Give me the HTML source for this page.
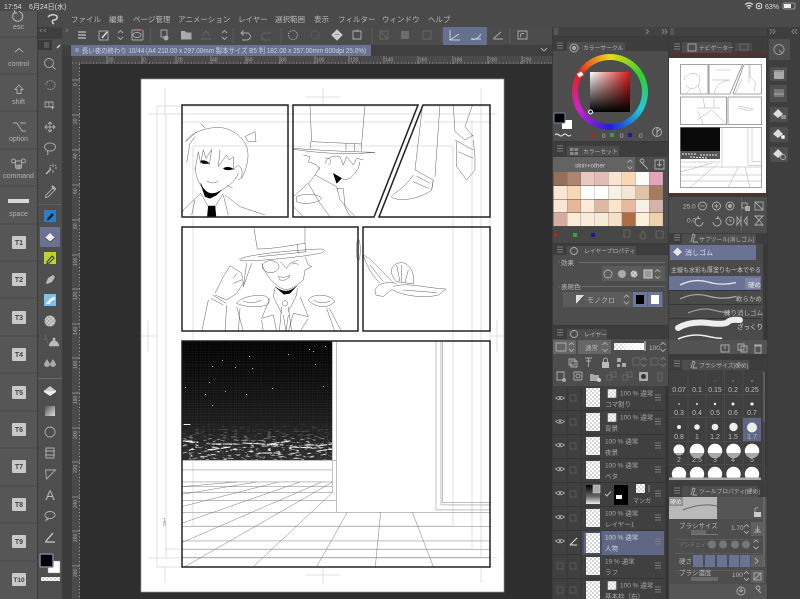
<!DOCTYPE html>
<html lang="ja"><head><meta charset="utf-8"><title>Clip Studio</title>
<style>
html,body{margin:0;padding:0;width:800px;height:599px;overflow:hidden;background:#2e2e2e}
#root{position:absolute;left:0;top:0;width:800px;height:599px;overflow:hidden;filter:blur(.3px)}
svg{position:absolute;left:0;top:0;display:block}
#wheel{position:absolute;left:572px;top:54px;width:76px;height:76px;border-radius:50%;background:conic-gradient(from 300deg,#e8201c,#e8d81c,#30d030,#20c8d8,#2020d8,#d020d0,#e8201c)}
#hole{position:absolute;left:578px;top:60px;width:64px;height:64px;border-radius:50%;background:#4d4d4d}
text{font-family:"Liberation Sans","Noto Sans CJK JP",sans-serif;fill:#b8b8b8;font-size:7.5px}
.h{font-size:5.8px}
.k{font-size:7px;fill:#b4b4b4;text-anchor:middle}
.t{font-size:7px;font-weight:bold;fill:#444;text-anchor:middle}
.s{font-size:6.5px;fill:#a8a8a8}
.r{font-size:5px;fill:#aaa}
.c{font-size:7px;fill:#bcbcbc;text-anchor:middle}
.i{fill:none;stroke:#aeaeae;stroke-width:.9}
.d{fill:none;stroke:#666;stroke-width:1}
.a path,.a ellipse,.a circle,.a rect{fill:none;stroke:#444;stroke-width:1.3}
.a .f{fill:#000;stroke:#000}
.g line,.g rect{fill:none;stroke:#d6d6e2;stroke-width:.8}
.b rect,.b path{fill:none;stroke:#222;stroke-width:1.5}
</style></head><body><div id="root">
<svg width="800" height="599" viewBox="0 0 800 599">
<defs>
<pattern id="chk" width="4" height="4" patternUnits="userSpaceOnUse"><rect width="4" height="4" fill="#fff"/><rect width="2" height="2" fill="#d5d5d5"/><rect x="2" y="2" width="2" height="2" fill="#d5d5d5"/></pattern>
<pattern id="grid" width="2.6" height="2.6" patternUnits="userSpaceOnUse"><path d="M0 0H2.6M0 0V2.6" stroke="#555" stroke-width=".6" fill="none"/></pattern>
<linearGradient id="sky" x1="0" y1="0" x2="0" y2="1"><stop offset="0" stop-color="#000"/><stop offset=".55" stop-color="#151515"/><stop offset="1" stop-color="#2c2c2c"/></linearGradient>
<linearGradient id="wr" x1="0" y1="0" x2="1" y2="0"><stop offset="0" stop-color="#fff"/><stop offset="1" stop-color="#d81818"/></linearGradient>
<linearGradient id="bk" x1="0" y1="0" x2="0" y2="1"><stop offset="0" stop-color="#000" stop-opacity="0"/><stop offset="1" stop-color="#000"/></linearGradient>
<linearGradient id="mono" x1="0" y1="0" x2="1" y2="1"><stop offset=".5" stop-color="#ddd"/><stop offset=".5" stop-color="#555"/></linearGradient>
<linearGradient id="grad" x1="0" y1="0" x2="1" y2="1"><stop offset="0" stop-color="#555"/><stop offset="1" stop-color="#ddd"/></linearGradient>
<linearGradient id="mk" x1="0" y1="0" x2="0" y2="1"><stop offset="0" stop-color="#000"/><stop offset=".6" stop-color="#666"/><stop offset="1" stop-color="#eee"/></linearGradient>
<linearGradient id="op" x1="0" y1="0" x2="1" y2="0"><stop offset="0" stop-color="#fff" stop-opacity=".1"/><stop offset="1" stop-color="#fff"/></linearGradient>
<filter id="noise" x="0" y="0" width="100%" height="100%"><feTurbulence type="fractalNoise" baseFrequency=".18 .55" numOctaves="3" seed="5"/><feColorMatrix values="0 0 0 0 1 0 0 0 0 1 0 0 0 0 1 7 0 0 0 -4"/></filter>
<mask id="cityM"><linearGradient id="cg" x1="0" y1="0" x2="0" y2="1"><stop offset="0" stop-color="#000"/><stop offset=".35" stop-color="#444"/><stop offset=".7" stop-color="#eee"/><stop offset="1" stop-color="#aaa"/></linearGradient><rect x="182" y="422" width="150" height="38" fill="url(#cg)"/></mask>
<clipPath id="top4"><rect x="669" y="440" width="95" height="13"/></clipPath>
<g id="eye"><path d="M-4.500 0Q0-3.500 4.500 0Q0 3.500-4.500 0Z" fill="none" stroke="#a5a5a5" stroke-width=".8"/><circle r="1.200" fill="#a5a5a5"/></g>
<g id="chev"><path d="M-2.500-2L0-4.500 2.500-2M-2.500 2L0 4.500 2.500 2" fill="none" stroke="#aaa" stroke-width=".9"/></g>
<g id="mi"><rect width="8" height="8" fill="url(#chk)" stroke="#ddd" stroke-width=".6"/></g>
<path id="bar" d="M0 0h6M0 2.500h6M0 5h6" stroke="#7c7c7c" fill="none"/>
</defs>

<!-- base -->
<rect width="800" height="599" fill="#2e2e2e"/>
<rect width="800" height="27" fill="#4a4a4a"/>
<rect x="38" y="27" width="514" height="18" fill="#4b4b4b"/>
<rect x="38" y="45" width="514" height="11" fill="#3f3f3f"/>
<rect x="62" y="56" width="490" height="8" fill="#4a4a4a"/>
<rect x="62" y="56" width="10" height="543" fill="#3b3b3b"/>
<rect x="72" y="56" width="8" height="543" fill="#4a4a4a"/>
<path d="M72 63H552" stroke="#a0a0a0" stroke-dasharray="1 2.500" fill="none"/>
<path d="M79.500 64V599" stroke="#a0a0a0" stroke-dasharray="1 2.500" fill="none"/>
<path d="M107 56v8M142 56v8M176 56v8M211 56v8M246 56v8M280 56v8M315 56v8M349 56v8M384 56v8M418 56v8M453 56v8M488 56v8M522 56v8" stroke="#888" fill="none"/>
<path d="M72 80h8M72 115h8M72 150h8M72 185h8M72 220h8M72 255h8M72 289h8M72 324h8M72 358h8M72 393h8M72 428h8M72 462h8M72 497h8M72 531h8M72 566h8" stroke="#888" fill="none"/>
<text class="r" x="108" y="61.500">20</text><text class="r" x="143" y="61.500">0</text><text class="r" x="177" y="61.500">20</text><text class="r" x="212" y="61.500">40</text><text class="r" x="247" y="61.500">60</text><text class="r" x="281" y="61.500">80</text><text class="r" x="316" y="61.500">100</text><text class="r" x="350" y="61.500">120</text><text class="r" x="385" y="61.500">140</text><text class="r" x="419" y="61.500">160</text><text class="r" x="454" y="61.500">180</text><text class="r" x="489" y="61.500">200</text><text class="r" x="523" y="61.500">220</text>
<text class="r" transform="translate(77 86) rotate(-90)">0</text><text class="r" transform="translate(77 124) rotate(-90)">20</text><text class="r" transform="translate(77 159) rotate(-90)">40</text><text class="r" transform="translate(77 194) rotate(-90)">60</text><text class="r" transform="translate(77 229) rotate(-90)">80</text><text class="r" transform="translate(77 266) rotate(-90)">100</text><text class="r" transform="translate(77 300) rotate(-90)">120</text><text class="r" transform="translate(77 335) rotate(-90)">140</text><text class="r" transform="translate(77 369) rotate(-90)">160</text><text class="r" transform="translate(77 404) rotate(-90)">180</text><text class="r" transform="translate(77 439) rotate(-90)">200</text><text class="r" transform="translate(77 473) rotate(-90)">220</text><text class="r" transform="translate(77 508) rotate(-90)">240</text><text class="r" transform="translate(77 542) rotate(-90)">260</text><text class="r" transform="translate(77 577) rotate(-90)">280</text>

<!-- status -->
<text x="4" y="9" style="font-size:7px;fill:#ddd">17:54</text>
<text x="29" y="9" style="font-size:7px;fill:#ddd">6月24日(水)</text>
<path d="M745 4.500Q749 1.500 753 4.500M746.500 6.500Q749 4.500 751.500 6.500" fill="none" stroke="#ddd" stroke-width="1.100"/><circle cx="749" cy="8" r="1" fill="#ddd"/>
<circle cx="759" cy="6" r="2.800" fill="none" stroke="#ddd"/><circle cx="759" cy="6" r="1" fill="#ddd"/>
<text x="765" y="9" style="font-size:7px;fill:#ddd">63%</text>
<rect x="783" y="3" width="12" height="6" rx="1.500" fill="none" stroke="#aaa" stroke-width=".8"/><rect x="784" y="4" width="7" height="4" fill="#eee"/>

<!-- menu -->
<path d="M48 17Q52 13 57 16Q58 20 53 20M53 20Q51 22 54 24" fill="none" stroke="#c8c8c8" stroke-width="1.600"/>
<text x="71" y="22">ファイル</text><text x="109" y="22">編集</text><text x="133" y="22">ページ管理</text><text x="178" y="22">アニメーション</text><text x="238" y="22">レイヤー</text><text x="275" y="22">選択範囲</text><text x="314" y="22">表示</text><text x="338" y="22">フィルター</text><text x="382" y="22">ウィンドウ</text><text x="428" y="22">ヘルプ</text>

<!-- left keys -->
<rect x="0" y="11" width="37" height="588" fill="#565656"/>
<rect x="37" y="11" width="1" height="588" fill="#3c3c3c"/>
<path d="M0 37h37M0 74h37M0 111h37M0 149h37M0 186h37M0 224h37M0 261h37M0 298h37M0 336h37M0 373h37M0 411h37M0 448h37M0 486h37M0 523h37M0 561h37" stroke="#454545" fill="none"/>
<path d="M14 13a5 5 0 1 0 5-1.500M15 10l-1 3 3 0" fill="none" stroke="#c4c4c4" stroke-width=".9"/>
<text class="k" x="18.500" y="29">esc</text>
<path d="M15 52l4-3.500 4 3.500" class="i"/><text class="k" x="18.500" y="66">control</text>
<path d="M19 85l4 4.500h-2v4h-4v-4h-2z" class="i"/><text class="k" x="18.500" y="104">shift</text>
<path d="M13 123h4l5 8h4M20 123h6" class="i"/><text class="k" x="18.500" y="141">option</text>
<path d="M15.500 161h6v6h-6zM15.500 161a2 2 0 1 1 0-.1M21.500 161a2 2 0 1 0 0-.1M15.500 167a2 2 0 1 0 0-.1M21.500 167a2 2 0 1 1 0-.1" class="i"/><text class="k" x="18.500" y="178">command</text>
<rect x="8" y="199" width="21" height="4" fill="#d8d8d8"/><text class="k" x="18.500" y="216">space</text>
<rect x="12" y="236" width="14" height="13" rx="1" fill="#c9c9c9"/><text class="t" x="19" y="245">T1</text>
<rect x="12" y="273" width="14" height="13" rx="1" fill="#c9c9c9"/><text class="t" x="19" y="282">T2</text>
<rect x="12" y="311" width="14" height="13" rx="1" fill="#c9c9c9"/><text class="t" x="19" y="320">T3</text>
<rect x="12" y="348" width="14" height="13" rx="1" fill="#c9c9c9"/><text class="t" x="19" y="357">T4</text>
<rect x="12" y="386" width="14" height="13" rx="1" fill="#c9c9c9"/><text class="t" x="19" y="395">T5</text>
<rect x="12" y="423" width="14" height="13" rx="1" fill="#c9c9c9"/><text class="t" x="19" y="432">T6</text>
<rect x="12" y="460" width="14" height="13" rx="1" fill="#c9c9c9"/><text class="t" x="19" y="469">T7</text>
<rect x="12" y="498" width="14" height="13" rx="1" fill="#c9c9c9"/><text class="t" x="19" y="507">T8</text>
<rect x="12" y="535" width="14" height="13" rx="1" fill="#c9c9c9"/><text class="t" x="19" y="544">T9</text>
<rect x="12" y="573" width="14" height="13" rx="1" fill="#c9c9c9"/><text class="t" x="19" y="582" style="font-size:6.500px">T10</text>

<!-- tool column -->
<rect x="38" y="27" width="24" height="572" fill="#4e4e4e"/>
<rect x="38" y="27" width="24" height="12" fill="#3e3e3e"/>
<rect x="38" y="40" width="14" height="10" fill="#3a3a3a"/>
<path d="M57 48l3-3" stroke="#ccc" stroke-width="1.500"/>
<path d="M44 43h5M44 45h5M44 47h5" stroke="#777"/>
<circle cx="49" cy="63" r="4.500" class="i"/><path d="M52.500 66.500l3 3" class="i"/>
<path d="M46 85a4.500 4.500 0 1 1 1.500 3.500" class="i" stroke-dasharray="1.500 1"/>
<path d="M45 102h8v5h-8zM49 102v5" class="i"/><path d="M51 106l4 1.500-2 .5-.5 2z" fill="#bbb"/>
<path d="M50 122v10M45 127h10M48 124l2-2 2 2M48 130l2 2 2-2M47 125l-2 2 2 2M53 125l2 2-2 2" class="i"/>
<ellipse cx="50" cy="147" rx="5.500" ry="4" class="i"/><path d="M47 151q2 3 0 4" class="i"/>
<path d="M46 174l5-5" stroke="#bbb" stroke-width="1.400"/><path d="M53 164v3M53 170v3M49 168h2M55 168h2M50 165l1 1M56 165l-1 1" class="i"/>
<path d="M46 195l7-7 2 2-7 7-2.500.5z" class="i"/><path d="M52 186l3.500 3.500" stroke="#bbb" stroke-width="2"/>
<rect x="38" y="204" width="24" height="1" fill="#5d5d5d"/>
<rect x="44" y="210" width="12" height="12" fill="#2b7fc4"/><path d="M47 219l5-6 2 2-5 5-2 .5z" fill="#123"/>
<rect x="40" y="227" width="20" height="20" rx="1" fill="#6b7392"/><path d="M45 238l5-5 5 5-5 4z" fill="#eee"/><path d="M45 238l5 4 5-4" fill="none" stroke="#555"/>
<rect x="44" y="252" width="12" height="12" fill="#bed22f"/><path d="M47 262l5-6 2 2-5 5-2 .5z" fill="none" stroke="#333"/>
<path d="M46 283l2-5 5-3 2 2-3 5-5 2z" fill="#bbb"/>
<rect x="44" y="294" width="12" height="12" fill="#7fc0ea"/><path d="M46 304q5-8 9-7v3q-4 0-5 4z" fill="#eaf6ff"/>
<circle cx="50" cy="321" r="5.500" fill="url(#chk)" opacity=".7"/>
<path d="M45 339h2M47 342h1M45 336h1M49 346h10q-1-5-4-5v-3h-2v3q-3 0-4 5z" fill="#bbb" stroke="#bbb" stroke-width=".5"/>
<path d="M47 359l-3 5a3 3 0 0 0 6 0zM53 359l-3 5a3 3 0 0 0 6 0z" fill="#aaa"/>
<rect x="38" y="378" width="24" height="1" fill="#6a6a6a"/>
<path d="M45 390l5-4 5 4-5 4.500z" fill="#ccc"/><path d="M44 390q6 3 12 0v2l-6 4-6-4z" fill="#eee"/>
<rect x="45" y="406" width="10" height="10" fill="url(#grad)"/>
<circle cx="50" cy="432" r="5" class="i"/>
<path d="M46 448h8v10h-8zM45 451h10M45 455h10" class="i"/>
<path d="M45.500 470h10l-9 9z" class="i"/>
<text x="50" y="500" style="font-size:14px;fill:#b8b8b8;text-anchor:middle">A</text>
<ellipse cx="50" cy="515" rx="5" ry="3.500" class="i"/><path d="M47 518l-1 2.500 3-2" class="i"/>
<path d="M46 541l7-8M45 542h10" stroke="#ccc" stroke-width="1.300"/>
<rect x="48" y="561" width="12" height="12" fill="#fff" stroke="#888" stroke-width=".5"/>
<rect x="40" y="554" width="13" height="13" rx="1" fill="#000" stroke="#7a84a8" stroke-width="1.500"/>
<rect x="41" y="577" width="19" height="4" fill="url(#chk)"/>

<!-- toolbar -->
<path d="M78 32h8M78 35h8M78 38h8" stroke="#c4c4c4" fill="none" stroke-width="1.200"/>
<rect x="99" y="31" width="9" height="9" class="i"/><path d="M102 38l5-6" stroke="#ddd" stroke-width="1.500"/>
<use href="#chev" x="120.500" y="35"/>
<rect x="132" y="30" width="11" height="10" rx="1" class="i"/><ellipse cx="137" cy="35" rx="4" ry="2.500" class="i"/><circle cx="142" cy="30" r="1" fill="#d33"/>
<path d="M150.500 28v15M233 28v15M281 28v15M372 28v15M442 28v15M510 28v15" stroke="#5e5e5e" fill="none"/>
<path d="M161 30h6v7h-6z" class="i"/><circle cx="166" cy="38" r="2.500" fill="#aaa"/>
<path d="M181 31h4l1.500 1.500h5v7h-10.500z" fill="#aaa"/>
<path d="M201 39h10M202 36l4-5 4 5" class="d"/>
<use href="#chev" x="224.500" y="35"/>
<path d="M241 33h6a3 3 0 0 1 0 7h-5M243.500 30.500L241 33l2.500 2.500" class="i"/>
<path d="M271 33h-6a3 3 0 0 0 0 7h5" class="d"/>
<circle cx="293" cy="35" r="4.500" class="i" stroke-dasharray="1.500 1"/>
<circle cx="315" cy="35" r="4" class="d" stroke-dasharray="1 1"/>
<path d="M332 35l5-5 5 5-5 5zM332 34q5 2 10 0" fill="#ccc" stroke="#ccc"/>
<path d="M353 31h8v8h-8zM357 29v3" class="i"/>
<rect x="380" y="31" width="8" height="8" class="d"/><path d="M380 31l8 8" class="d"/>
<rect x="401" y="31" width="8" height="8" fill="#6c6c6c"/><rect x="423" y="31" width="8" height="8" class="d"/>
<rect x="443" y="27" width="44" height="18" rx="1" fill="#66708f"/>
<path d="M450 30v10h10M450 40l9-6" fill="none" stroke="#c9cfe3"/>
<path d="M471 39q6 2 10-5M471 39h10" fill="none" stroke="#c9cfe3"/>
<path d="M493 39h10M494 38l7-6" class="i"/>
<path d="M518 31h9v8h-9zM521 37a2 2 0 1 1 3-3" class="i"/>
<rect x="71" y="45" width="300" height="11" fill="#6a7292"/>
<rect x="75" y="48" width="4" height="4" fill="#8d94ad"/>
<text x="82" y="53.200" textLength="284" lengthAdjust="spacingAndGlyphs" style="font-size:7px;fill:#cfd1da">長い夜の終わり 10/44 (A4 210.00 x 297.00mm 製本サイズ B5 判 182.00 x 257.00mm 600dpi 25.0%)</text>
<path d="M541 48l3 3 3-3" class="i"/>
<path d="M42 32l-2-1.500 2-1.500M46 32l-2-1.500 2-1.500M66 32l2-1.500-2-1.500" stroke="#777" fill="none"/>

<!-- page -->
<rect x="141" y="79" width="363" height="513" fill="#fff" stroke="#999" stroke-width=".7"/>
<g class="g">
<rect x="157" y="106" width="333" height="461"/>
<rect x="166" y="114" width="315" height="444"/>
<rect x="193" y="146" width="260" height="380"/>
<line x1="472" y1="120" x2="472" y2="549"/>
<line x1="166" y1="549" x2="472" y2="549"/>
<line x1="306" y1="97" x2="340" y2="97"/><line x1="323" y1="88" x2="323" y2="105"/>
<line x1="165" y1="88" x2="165" y2="114"/><line x1="148" y1="114" x2="166" y2="114"/>
<line x1="481" y1="88" x2="481" y2="114"/><line x1="481" y1="114" x2="497" y2="114"/>
<line x1="148" y1="320" x2="148" y2="352"/><line x1="141" y1="336" x2="157" y2="336"/>
<line x1="497" y1="320" x2="497" y2="352"/><line x1="490" y1="336" x2="504" y2="336"/>
<line x1="306" y1="575" x2="340" y2="575"/><line x1="323" y1="568" x2="323" y2="584"/>
<line x1="165" y1="567" x2="165" y2="583"/><line x1="481" y1="567" x2="481" y2="583"/>
<line x1="148" y1="558" x2="166" y2="558"/><line x1="481" y1="558" x2="497" y2="558"/>
</g>
<text x="163" y="522" style="font-size:5px;fill:#777">1</text><text x="163" y="526" style="font-size:5px;fill:#777">0</text>
<path d="M182 122H418M423 122H490" stroke="#d5e5d5" fill="none"/>

<!-- dark panel art -->
<rect x="182" y="341" width="150" height="119" fill="url(#sky)"/>
<rect x="182" y="341" width="150" height="119" fill="url(#grid)" opacity=".35"/>
<rect x="182" y="422" width="150" height="38" filter="url(#noise)" mask="url(#cityM)"/>
<g stroke="#fff" fill="none" stroke-linecap="round">
<path d="M183 441h9M184 424.500h6M186 441.500l12 1M212 444h20M230 447l-20 3M243 443l40 2M290 441l-20 3M290 447l26 1M318 446l14-2M318 451l14-2M305 445h12M263 453h16" stroke-width="1" stroke-dasharray="3 1 5 2 1 1"/>
</g>
<g fill="#bbb"><rect x="222" y="360" width="1" height="1"/><rect x="249" y="356" width="1" height="1"/><rect x="288" y="354" width="1" height="1"/><rect x="309" y="349" width="1" height="1"/><rect x="313" y="351" width="1" height="1"/><rect x="325" y="346" width="1" height="1"/><rect x="212" y="366" width="1" height="1"/><rect x="235" y="367" width="1" height="1"/><rect x="252" y="368" width="1" height="1"/><rect x="315" y="364" width="1" height="1"/><rect x="209" y="382" width="1" height="1"/><rect x="185" y="387" width="1" height="1"/><rect x="205" y="394" width="1" height="1"/><rect x="225" y="391" width="1" height="1"/><rect x="246" y="394" width="1" height="1"/><rect x="272" y="388" width="1" height="1"/><rect x="323" y="386" width="1" height="1"/><rect x="212" y="405" width="1" height="1"/></g>
<g class="a" transform="translate(140 335) scale(.3333)">
<path style="stroke:#999;stroke-width:1.800" d="M125 405H577M125 377H590M125 441H577M125 455H577M125 472H577M125 497H590M125 532H1050M125 574H1050M125 618H1050M125 643H1050M125 667H1050M577 20V472M590 20V532M888 20V525M903 20V510M907 20V503M888 525H1050M903 510H1050M907 503H1050"/>
<path style="stroke:#777;stroke-width:1.500" d="M125 455L290 441M125 478L350 441M125 515L415 441M125 565L480 441M125 623L545 441M135 695L578 441M340 695L578 472M530 695L622 532M706 695L722 532M880 695L817 532"/>
</g>

<!-- panel 1 & 2 art -->
<g class="a" transform="translate(180 100) scale(.3333)">
<path d="M17 125C30 100 70 85 110 82C150 82 185 105 200 140C210 170 200 205 185 235M50 95L17 125M45 110L30 130L20 188"/>
<path d="M62 70L75 85M195 110L225 95L228 125L205 125L195 110"/>
<path d="M45 210L55 155L62 190L70 150L78 175L95 148L88 195M120 150L115 200L140 165L148 180L160 170L160 210L175 195"/>
<path d="M45 205C50 240 62 260 75 272M175 220C165 245 140 262 125 270M175 195C190 205 190 235 175 240M140 255L158 265M80 243Q100 255 115 243"/>
<path d="M62 280L85 320M130 280L105 320M62 280L10 330L5 345M130 285L145 345M135 285L180 320L255 345M45 300L35 345"/>
<path class="f" d="M62 250C75 280 95 290 125 270L110 285L90 295L75 290Z"/>
<path class="f" d="M85 318L105 318L108 350L82 350Z"/>
<path class="f" d="M62 183Q75 178 88 190Q75 192 66 190ZM130 205Q145 197 160 207Q148 212 135 209Z"/>
<path d="M390 15L395 125M555 15L545 130M395 125L545 132M342 145C400 150 500 155 585 157C500 165 420 160 342 148ZM392 125V146M498 130V152M523 131V153M545 130V154"/>
<path d="M370 165L390 170L385 185L410 195L420 210M435 190C440 170 470 165 480 170L490 195L500 170L520 195L530 175L550 180M540 185L535 205L525 220L510 235L495 240L485 235M435 175C450 170 460 185 445 195"/>
<path d="M405 225L470 260M420 200L405 225L390 245L340 290M350 290C370 280 415 280 425 295C415 310 370 315 350 305ZM470 260L480 300L525 350M385 250L420 310L450 350M470 265H490L495 320L510 350M340 320L370 350"/>
<path class="f" d="M460 220L485 235L470 250Z"/>
</g>
<g class="a" transform="translate(180 225) scale(.3333)">
<path d="M222 10L232 72M375 5V55M232 72C280 72 340 60 375 55M235 95C290 90 340 85 378 80M375 55L378 82M352 58L355 85M180 103C190 92 300 78 420 72C440 72 435 80 420 85C340 100 210 110 185 107C178 105 178 103 180 103Z"/>
<path d="M375 95L385 120L395 125L375 135L370 165L350 180M245 115C255 145 270 165 290 180C310 200 330 195 350 180M335 118Q345 110 355 120M300 110L320 130L330 115L355 105"/>
<ellipse cx="272" cy="125" rx="25" ry="18"/>
<path d="M295 155Q320 160 330 150Q322 170 300 165Z"/>
<path class="f" d="M285 185C300 195 320 210 350 183L330 205L312 208Z"/>
<path d="M285 190L280 215L305 265M352 190L350 210L325 260M305 245L298 320M325 245L335 320M310 270L318 320L325 270M270 220L245 280L280 270L290 320M360 215L385 275L340 265L325 320M245 285L250 320M385 280L360 320"/>
<circle cx="315" cy="235" r="8"/>
<path d="M170 235C180 215 240 205 260 215C270 225 270 235 260 240C230 250 190 245 170 235ZM385 225C395 205 450 205 465 230C440 255 400 245 385 225ZM190 228Q215 240 245 225M400 225Q425 240 450 228"/>
<path d="M448 250L485 320M440 250L465 320M170 245L190 320M180 250L175 320"/>
<path d="M150 122L130 155L105 205M150 122L185 145L190 175L170 205L140 225L105 210M170 145L160 160M185 165L160 175M98 210L138 235M93 220L130 240M85 225L65 320M140 240L135 320M215 115L190 185L200 115"/>
</g>
<!-- legs & bird -->
<g class="a" transform="translate(140 90) scale(.3333)">
<path d="M848 44L825 240M900 44L885 260M825 240L880 270L875 300M940 44L945 125M998 44L975 110L1000 140M945 125L975 150L1000 135M950 155V230L980 270L1005 240L1005 200L1000 150M955 185L1000 205M945 150L1000 180"/>
<path d="M820 255C790 300 755 310 755 322C775 335 835 330 875 300L880 270M830 258L870 280M820 275L865 295"/>
<ellipse cx="655" cy="480" rx="6" ry="32"/>
<path d="M670 495C680 530 700 560 720 580M670 495C695 505 730 550 760 578M690 525L730 575M705 600C715 580 735 575 770 580M705 600L708 615L730 620L755 598"/>
<path d="M770 575C745 550 750 520 785 518C810 520 825 550 820 582ZM785 525V575M770 525L780 575M805 540L795 578"/>
<path d="M760 590C800 575 860 595 918 597L895 615C860 625 790 620 755 598M790 600L890 608"/>
</g>
<!-- borders -->
<g class="b">
<rect x="182" y="105" width="106" height="112"/>
<path d="M293 105H418L374 217H293Z"/>
<path d="M423 105H490V217H379Z"/>
<rect x="182" y="227" width="176" height="104"/>
<rect x="363" y="227" width="127" height="104"/>
<rect x="182" y="341" width="308" height="226"/>
</g>

<!-- right side bg -->
<rect x="552" y="27" width="248" height="572" fill="#3a3a3a"/>
<rect x="768" y="27" width="32" height="572" fill="#3e3e3e"/>
<rect x="553" y="27" width="115" height="9" fill="#424242"/><rect x="669" y="27" width="98" height="9" fill="#424242"/>
<rect x="554" y="28" width="4" height="7" fill="#555"/><rect x="670" y="28" width="4" height="7" fill="#555"/>
<path d="M646 29l2.500 2.500-2.500 2.500M662 29l2 2.500-2 2.500M665 29l2 2.500-2 2.500M770 29l2 2.500-2 2.500M773 29l2 2.500-2 2.500M797 29l-2 2.500 2 2.500M794 29l-2 2.500 2 2.500" stroke="#888" fill="none"/>

<!-- color circle panel -->
<rect x="553" y="37" width="115" height="104" fill="#4d4d4d"/>
<rect x="553" y="37" width="115" height="14" fill="#3d3d3d"/>
<rect x="567" y="42" width="58" height="10" rx="1" fill="#4d4d4d"/>
<use href="#bar" x="557" y="43"/>
<circle cx="574" cy="48" r="4" fill="none" stroke="#aaa"/><circle cx="574" cy="48" r="2" fill="#aaa"/>
<text class="h" x="583" y="50">カラーサークル</text>
<rect x="553" y="141" width="115" height="2" fill="#3a3a3a"/>
</svg>

<div id="wheel"></div><div id="hole"></div>

<svg width="800" height="599" viewBox="0 0 800 599">
<rect x="590" y="72" width="40" height="40" fill="url(#wr)"/>
<rect x="590" y="72" width="40" height="40" fill="url(#bk)"/>
<circle cx="590.500" cy="112" r="2" fill="none" stroke="#fff"/>
<rect x="577" y="72" width="6" height="5" fill="#fff" stroke="#c33" transform="rotate(-30 580 74)"/>
<rect x="562" y="120" width="10" height="9" fill="#fff"/>
<rect x="554" y="113" width="11" height="10" rx="1" fill="#000" stroke="#7a84a8"/>
<path d="M555 135q2-2 4 0t4 0 4 0 4 0" fill="none" stroke="#ddd" stroke-width="1.200"/>
<rect x="591" y="133" width="4" height="4" fill="#a02b20"/><rect x="610" y="133" width="4" height="4" fill="#3aa03a"/><rect x="628" y="133" width="4" height="4" fill="#1a1aa0"/>
<text x="602" y="138" style="font-size:6.500px">0</text><text x="620" y="138" style="font-size:6.500px">0</text><text x="639" y="138" style="font-size:6.500px">0</text>
<circle cx="657" cy="132" r="4.500" fill="none" stroke="#aaa"/><path d="M657 127.500v9M657 132l3-3" stroke="#aaa" fill="none"/>

<!-- color set -->
<rect x="553" y="143" width="115" height="14" fill="#3d3d3d"/>
<rect x="567" y="146" width="52" height="10" rx="1" fill="#4d4d4d"/>
<use href="#bar" x="557" y="146"/>
<rect x="570" y="148" width="8" height="7" fill="#888"/><path d="M570 151.500h8M574 148v7" stroke="#333" stroke-width=".7"/>
<text class="h" x="583" y="153.500">カラーセット</text>
<rect x="553" y="157" width="115" height="70" fill="#4d4d4d"/>
<rect x="553" y="157" width="82" height="15" rx="1" fill="#636363"/>
<text x="575" y="167.500" style="font-size:6.500px;fill:#cfcfcf">skin+other</text>
<use href="#chev" x="630" y="164.500"/>
<path d="M640 161l6 6M646 167l2 2M640 161a2 2 0 1 1 2 2" class="i"/>
<path d="M655 160h9v9h-9zM659.500 161v5M657.500 164l2 2 2-2" class="i"/>
<rect x="553.500" y="172" width="13.500" height="13.500" fill="#966f58"/><rect x="567.200" y="172" width="13.500" height="13.500" fill="#ad8673"/><rect x="580.900" y="172" width="13.500" height="13.500" fill="#e8c9bd"/><rect x="594.600" y="172" width="13.500" height="13.500" fill="#e3bdb3"/><rect x="608.300" y="172" width="13.500" height="13.500" fill="#f9e4d3"/><rect x="622" y="172" width="13.500" height="13.500" fill="#f8d8b4"/><rect x="635.700" y="172" width="13.500" height="13.500" fill="#fbfbf7"/><rect x="649.400" y="172" width="13.500" height="13.500" fill="#e5a3b8"/>
<rect x="553.500" y="186" width="13.500" height="13" fill="#fbe6d4"/><rect x="567.200" y="186" width="13.500" height="13" fill="#f8d7b4"/><rect x="580.900" y="186" width="13.500" height="13" fill="#fff"/><rect x="594.600" y="186" width="13.500" height="13" fill="#fff"/><rect x="608.300" y="186" width="13.500" height="13" fill="#f9f0e6"/><rect x="622" y="186" width="13.500" height="13" fill="#f6e5d2"/><rect x="635.700" y="186" width="13.500" height="13" fill="#e0c2a6"/><rect x="649.400" y="186" width="13.500" height="13" fill="#a67d63"/>
<rect x="553.500" y="199.500" width="13.500" height="13" fill="#fbe6d4"/><rect x="567.200" y="199.500" width="13.500" height="13" fill="#e6b79a"/><rect x="580.900" y="199.500" width="13.500" height="13" fill="#fce9d8"/><rect x="594.600" y="199.500" width="13.500" height="13" fill="#dfb8a4"/><rect x="608.300" y="199.500" width="13.500" height="13" fill="#fbe5c8"/><rect x="622" y="199.500" width="13.500" height="13" fill="#e6b99e"/><rect x="635.700" y="199.500" width="13.500" height="13" fill="#f7efe3"/><rect x="649.400" y="199.500" width="13.500" height="13" fill="#d7b2a8"/>
<rect x="553.500" y="213" width="13.500" height="13" fill="#d5aba2"/><rect x="567.200" y="213" width="13.500" height="13" fill="#fbebd5"/><rect x="580.900" y="213" width="13.500" height="13" fill="#faeadb"/><rect x="594.600" y="213" width="13.500" height="13" fill="#f7ead8"/><rect x="608.300" y="213" width="13.500" height="13" fill="#f6dfcb"/><rect x="622" y="213" width="13.500" height="13" fill="#ad6d42"/><rect x="635.700" y="213" width="13.500" height="13" fill="#fbefd9"/><rect x="649.400" y="213" width="13.500" height="13" fill="#ecd3ab"/>
<rect x="553" y="227" width="115" height="16" fill="#474747"/>
<rect x="554" y="233" width="4" height="4" fill="#a02b20"/><rect x="573" y="233" width="4" height="4" fill="#3aa03a"/><rect x="591" y="233" width="4" height="4" fill="#1a1aa0"/>
<path d="M624 230h6v7h-6zM640 236l3-5 3 5a3 3 0 0 1-6 0zM656 231h7v7h-7z" class="d"/>

<!-- layer property -->
<rect x="553" y="245" width="115" height="10" fill="#3d3d3d"/>
<rect x="567" y="246" width="69" height="10" rx="1" fill="#4d4d4d"/>
<use href="#bar" x="557" y="247"/>
<circle cx="574" cy="251" r="3.500" class="i"/>
<text class="h" x="584" y="253">レイヤープロパティ</text>
<rect x="553" y="255" width="115" height="70" fill="#4d4d4d"/>
<path d="M558 262h2M579 262.500h86M558 286.500h2M579 286.500h86" stroke="#888" fill="none" stroke-width=".6"/>
<text x="561" y="265" style="font-size:6.500px">効果</text>
<text x="561" y="289" style="font-size:6.500px">表現色</text>
<rect x="602" y="266" width="63" height="15" rx="1" fill="#5b5b5b"/>
<circle cx="608" cy="274" r="4" class="i"/><circle cx="622" cy="274" r="4" fill="#aaa"/><circle cx="634" cy="274" r="3.500" fill="url(#chk)" opacity=".7"/><rect x="644" y="270" width="8" height="8" fill="#999" stroke="#ccc"/>
<use href="#chev" x="657.500" y="274"/>
<rect x="563" y="292" width="99" height="15" rx="1" fill="#5b5b5b"/>
<rect x="576" y="295" width="8" height="9" fill="url(#mono)"/>
<text x="587" y="302.500" style="font-size:7px">モノクロ</text>
<use href="#chev" x="626.500" y="299.500"/>
<rect x="633" y="292" width="14.500" height="15" fill="#6b7698"/><rect x="636" y="295" width="8" height="9" fill="#000"/>
<rect x="648" y="292" width="14.500" height="15" fill="#6b7698"/><rect x="651" y="295" width="8" height="9" fill="#fff"/>

<!-- layer panel -->
<rect x="553" y="328" width="115" height="10" fill="#3d3d3d"/>
<rect x="567" y="329" width="40" height="10" rx="1" fill="#4d4d4d"/>
<use href="#bar" x="557" y="330"/>
<circle cx="574" cy="334" r="3.500" class="i"/>
<text class="h" x="584" y="336.500">レイヤー</text>
<rect x="553" y="339" width="115" height="47" fill="#4d4d4d"/>
<rect x="553" y="340" width="23" height="14" rx="1" fill="#666"/><rect x="556" y="343" width="10" height="8" rx="1" class="i"/><use href="#chev" x="571.500" y="347"/>
<rect x="578" y="340" width="33" height="14" rx="1" fill="#666"/><text x="585" y="350" style="font-size:6.500px">通常</text><use href="#chev" x="605" y="347"/>
<rect x="614" y="343" width="30" height="7" fill="url(#chk)"/><rect x="614" y="343" width="30" height="7" fill="url(#op)"/><rect x="644" y="341" width="2" height="10" fill="#999"/>
<text x="649" y="350" style="font-size:6.500px">100</text><use href="#chev" x="663" y="347"/>
<path d="M569 359h6v6h-6zM571 361h6v6h-6z" class="i"/><path d="M585 358h7M588.500 358v9M586 361h5" class="i" stroke-width="1.300"/>
<rect x="602" y="362" width="7" height="6" fill="#bbb"/><path d="M603.500 362v-2a2 2 0 0 1 4 0v2" class="i"/>
<rect x="617" y="358" width="4" height="4" fill="#aaa"/><rect x="622" y="363" width="4" height="4" fill="#aaa"/><rect x="617" y="364" width="3" height="3" fill="#aaa"/>
<path d="M633 358h7v7h-7zM651 358h7v7h-7z" class="d"/><use href="#chev" x="644" y="362" opacity=".5"/><use href="#chev" x="663" y="362" opacity=".5"/>
<path d="M557 372h7v8h-7z" class="i"/><circle cx="564" cy="380" r="2" fill="#aaa"/>
<rect x="574" y="372" width="8" height="8" rx="1" class="i"/><circle cx="578" cy="376" r="2" class="i"/>
<path d="M590 374h3l1 1h5v6h-9z" fill="#aaa"/><circle cx="599" cy="380" r="2" fill="#ccc"/>
<path d="M607 375h5v5h-5zM611 372h5v5h-5zM623 375h5v5h-5zM627 372h5v5h-5z" class="d"/>
<rect x="639" y="372" width="9" height="9" rx="1" fill="#aaa"/><circle cx="643.500" cy="376.500" r="2.500" fill="#333"/>
<path d="M657 373h6M658 373v8h4v-8" class="d"/>

<!-- layers list -->
<rect x="553" y="386" width="112" height="213" fill="#404040"/>
<rect x="666" y="386" width="2" height="213" fill="#333"/>
<path d="M553 410.500h112M553 434.500h112M553 458.500h112M553 482.500h112M553 506.500h112M553 530.500h112M553 554.500h112M553 578.500h112M567 386v213M581 386v213" stroke="#353535" fill="none"/>
<rect x="582" y="531" width="82" height="24" fill="#5f6785"/>
<rect x="583" y="532" width="18" height="22" fill="none" stroke="#30364d"/>
<use href="#eye" x="560" y="398"/><use href="#eye" x="560" y="421.500"/><use href="#eye" x="560" y="445"/><use href="#eye" x="560" y="469"/><use href="#eye" x="560" y="493"/><use href="#eye" x="560" y="517"/><use href="#eye" x="560" y="541"/>
<rect x="570" y="395" width="6" height="6" fill="none" stroke="#595959"/><rect x="570" y="419" width="6" height="6" fill="none" stroke="#595959"/><rect x="570" y="443" width="6" height="6" fill="none" stroke="#595959"/><rect x="570" y="467" width="6" height="6" fill="none" stroke="#595959"/><rect x="570" y="491" width="6" height="6" fill="none" stroke="#595959"/><rect x="570" y="515" width="6" height="6" fill="none" stroke="#595959"/>
<path d="M570 545l7-7M570 545h7" stroke="#ddd" fill="none"/>
<rect x="557" y="563" width="6" height="6" fill="none" stroke="#595959"/><rect x="570" y="563" width="6" height="6" fill="none" stroke="#595959"/>
<rect x="557" y="587" width="6" height="6" fill="none" stroke="#595959"/><rect x="570" y="587" width="6" height="6" fill="none" stroke="#595959"/>
<rect x="586" y="388" width="14" height="19" fill="url(#chk)"/><rect x="586" y="413" width="14" height="18" fill="url(#chk)"/><rect x="586" y="437" width="14" height="18" fill="url(#chk)"/><rect x="586" y="461" width="14" height="18" fill="url(#chk)"/>
<rect x="586" y="485" width="14" height="19" fill="url(#mk)"/><rect x="593" y="485" width="7" height="8" fill="#aaa" stroke="#ddd" stroke-width=".5"/>
<rect x="586" y="509" width="14" height="18" fill="url(#chk)"/><rect x="586" y="533" width="14" height="20" fill="url(#chk)"/><rect x="586" y="557" width="14" height="18" fill="url(#chk)"/><rect x="586" y="581" width="14" height="18" fill="url(#chk)"/>
<path d="M605 494l2 2 4-4.500" fill="none" stroke="#bbb"/>
<rect x="614" y="485" width="14" height="20" fill="#000"/><rect x="616" y="495" width="6" height="4" fill="#fff"/>
<rect x="636" y="484" width="9" height="9" fill="url(#chk)"/><path d="M649 485v7" stroke="#888"/>
<use href="#mi" x="608" y="389.500"/><use href="#mi" x="608" y="413.500"/><use href="#mi" x="608" y="581.500"/>
<text class="s" x="620" y="395.500">100 % 通常</text><text class="s" x="605" y="406.500">コマ割り</text>
<text class="s" x="620" y="419.500">100 % 通常</text><text class="s" x="605" y="430.500">背景</text>
<text class="s" x="605" y="443.500">100 % 通常</text><text class="s" x="605" y="454.500">夜景</text>
<text class="s" x="605" y="467.500">100 % 通常</text><text class="s" x="605" y="478.500">ベタ</text>
<text class="s" x="633" y="503" style="font-size:6px">マンガ</text>
<text class="s" x="605" y="515.500">100 % 通常</text><text class="s" x="605" y="526.500">レイヤー1</text>
<text class="s" x="605" y="539.500" style="fill:#cfd2dd">100 % 通常</text><text class="s" x="605" y="550.500" style="fill:#cfd2dd">人物</text>
<text class="s" x="605" y="563.500">19 % 通常</text><text class="s" x="605" y="574.500">ラフ</text>
<text class="s" x="620" y="587.500">100 % 通常</text><text class="s" x="605" y="598.500">基本枠（右）</text>
<use href="#bar" x="655" y="395"/><use href="#bar" x="655" y="419"/><use href="#bar" x="655" y="443"/><use href="#bar" x="655" y="467"/><use href="#bar" x="655" y="491"/><use href="#bar" x="655" y="515"/><use href="#bar" x="655" y="539"/><use href="#bar" x="655" y="563"/><use href="#bar" x="655" y="587"/>

<!-- navigator -->
<rect x="669" y="37" width="98" height="16" fill="#3d3d3d"/>
<rect x="682" y="42" width="50" height="11" rx="1" fill="#4d4d4d"/><rect x="735" y="43" width="17" height="8" fill="#4a4a4a"/>
<use href="#bar" x="674" y="44"/>
<rect x="688" y="44" width="8" height="7" class="i"/><rect x="740" y="44" width="8" height="6" class="d"/>
<text class="h" x="699" y="50">ナビゲーター</text>
<rect x="669" y="53" width="97" height="2" fill="#5c2d28"/>
<rect x="669" y="58" width="97" height="135" fill="#fff"/>
<rect x="669" y="193" width="97" height="2" fill="#5c2d28"/>
<g fill="none" stroke="#8a8a8a" stroke-width=".8">
<rect x="680.500" y="64.500" width="27.500" height="29.500"/><path d="M709 64.500h33.500L730 94h-21zM744 64.500h17.500v29.500H733z"/>
<rect x="680.500" y="97" width="46" height="27.500"/><rect x="728" y="97" width="33.500" height="27.500"/><rect x="680.500" y="127.500" width="81" height="60"/>
</g>
<rect x="680.500" y="127.500" width="39.500" height="31.500" fill="#0a0a0a"/>
<rect x="680.500" y="151" width="39.500" height="8" fill="#555"/>
<path d="M682 154h15M700 155h18M690 157l18 1" stroke="#eee" stroke-dasharray="2 1"/>
<g fill="none" stroke="#aaa" stroke-width=".5">
<path d="M684 80a9 9 0 0 1 15-4q3 8-4 12q-6 2-9-3M690 89l-4 5M698 84l3 10M714 94q2-12 15-14M716 70h14M712 80h18M735 94l7-15M750 65l0 12 6 6-2 8M749 65v18"/>
<path d="M698 108h22M703 98l2 10M714 98v10M697 120l15-10 14 14M703 124l-5-13M738 108l12 3 3-2-15-3"/>
<path d="M680.500 162h39.500M680.500 167h81M680.500 175h81M680.500 181h81M680.500 172l32-9M690 187.500l28-24M728 187.500l10-20M750 187.500l-5-20M722 127.500v40M748 127.500v38h14M752 127.500v34h10"/>
</g>

<!-- nav controls -->
<rect x="669" y="197" width="98" height="36" fill="#4d4d4d"/>
<text x="683" y="208.500" style="font-size:6.500px">25.0</text><text x="687" y="222.500" style="font-size:6.500px">0.0</text>
<circle cx="702.500" cy="206" r="4" class="i"/><path d="M700.500 206h4" class="i"/>
<circle cx="716.500" cy="206" r="4" class="i"/><path d="M714.500 206h4M716.500 204v4" class="i"/>
<circle cx="730" cy="206" r="4" class="i"/><circle cx="730" cy="206" r="2" fill="#aaa"/>
<path d="M741.500 197v36" stroke="#5f5f5f"/>
<rect x="742" y="203" width="5" height="5" class="i"/><rect x="745" y="206" width="5" height="5" fill="#aaa"/>
<rect x="755" y="202" width="8" height="8" class="i"/><path d="M755 202l8 8" class="i"/>
<path d="M703 222a4 4 0 1 1-4-4M698 216v2.500h2.500M713 222a4 4 0 1 0 4-4M718 216v2.500h-2.500" class="i"/>
<circle cx="730" cy="221" r="4" class="i"/><path d="M730 219v2h1.500" class="i"/>
<path d="M741 216v10M744 221l3-4v8zM740 221l-3-4v8z" class="i"/>
<path d="M755 216h8l-4 4 4 5h-8l4-5z" class="i"/>

<!-- subtool -->
<rect x="669" y="233" width="98" height="11" fill="#3d3d3d"/>
<rect x="682" y="234" width="74" height="10" rx="1" fill="#4d4d4d"/>
<use href="#bar" x="674" y="235"/>
<path d="M691 242l2-8 2 1-2 7h5" class="i"/>
<text class="h" x="699" y="241.500">サブツール[消しゴム]</text>
<rect x="669" y="244" width="94" height="97" fill="#4a4a4a"/>
<rect x="670" y="245" width="86" height="15" fill="#6b7394"/>
<path d="M673 252l4.500-4.500 4.500 4.500-4.500 4z" fill="#e8e8e8"/>
<text x="685" y="255" style="font-size:7px;fill:#dde">消しゴム</text>
<rect x="765" y="244" width="2" height="110" fill="#363636"/>
<text x="671" y="272" textLength="90" lengthAdjust="spacingAndGlyphs" style="font-size:6.500px;fill:#c8c8c8">主線も水彩も厚塗りも一本でやる</text>
<rect x="669" y="276" width="92" height="14" fill="#6b7394"/><rect x="745" y="278" width="15" height="11" fill="#7e86a4"/>
<path d="M680 285q14-7 28-3t28 .5" fill="none" stroke="#dfe3ef" stroke-width="1.300"/>
<text x="748" y="287" style="font-size:6.500px;fill:#e3e3e3">硬め</text>
<path d="M669 290.500h92M669 304.500h92M669 318.500h92" stroke="#353535"/>
<path d="M680 299q14-7 28-3t28 .5" fill="none" stroke="#aaa" stroke-width="1.200"/>
<text x="736" y="301" style="font-size:6.500px">軟らかめ</text>
<path d="M688 313q14-6 25-3t17 2" fill="none" stroke="#999" stroke-width="1.300"/>
<text x="724" y="315" style="font-size:6.500px">練り消しゴム</text>
<path d="M678 328q12-7 30-5t20-1 12-2" fill="none" stroke="#eee" stroke-width="6" stroke-linecap="round"/>
<text x="737" y="329" style="font-size:6.500px;fill:#ddd">ざっくり</text>
<path d="M678 339q14-6 28-3t16 2" fill="none" stroke="#eee" stroke-width="1.600"/>
<rect x="669" y="340" width="98" height="14" fill="#525252"/>
<path d="M721 345h8v7h-8zM725 346v3M738 344h6v6h-6zM741 346h6v6h-6zM755 346h6v7h-6zM754 345h8" class="i"/>

<!-- brush size -->
<rect x="669" y="359" width="98" height="10" fill="#3d3d3d"/>
<rect x="682" y="360" width="67" height="10" rx="1" fill="#4d4d4d"/>
<use href="#bar" x="674" y="361"/>
<path d="M691 368l2-7 2 1-2 6h4" class="i"/>
<text class="h" x="699" y="367.500">ブラシサイズ[硬め]</text>
<rect x="669" y="370" width="92" height="110" fill="#3f3f3f"/>
<path d="M688 370v110M706 370v110M724.500 370v110M743 370v110M669 394.500h92M669 417.500h92M669 441.500h92M669 464.500h92" stroke="#4a4a4a"/>
<rect x="762" y="370" width="3" height="110" fill="#444"/><rect x="763" y="372" width="2" height="50" fill="#5a5a5a"/>
<rect x="743" y="418" width="18" height="23" fill="#5f6785"/>
<text class="c" x="679" y="392">0.07</text><text class="c" x="697" y="392">0.1</text><text class="c" x="715" y="392">0.15</text><text class="c" x="733" y="392">0.2</text><text class="c" x="752" y="392">0.25</text>
<g fill="#eee"><circle cx="715" cy="381" r=".4"/><circle cx="733" cy="381" r=".5"/><circle cx="752" cy="381" r=".6"/>
<circle cx="679" cy="404" r=".8"/><circle cx="697" cy="404" r="1"/><circle cx="715" cy="404" r="1.200"/><circle cx="733" cy="404" r="1.500"/><circle cx="752" cy="404" r="1.600"/>
<circle cx="679" cy="427" r="2"/><circle cx="697" cy="427" r="2.800"/><circle cx="715" cy="427" r="3.300"/><circle cx="733.500" cy="427" r="4.200"/><circle cx="752" cy="427.500" r="5"/></g>
<text class="c" x="679" y="415">0.3</text><text class="c" x="697" y="415">0.4</text><text class="c" x="715" y="415">0.5</text><text class="c" x="733" y="415">0.6</text><text class="c" x="752" y="415">0.7</text>
<text class="c" x="679" y="439">0.8</text><text class="c" x="697" y="439">1</text><text class="c" x="715" y="439">1.2</text><text class="c" x="733" y="439">1.5</text><text class="c" x="752" y="439">1.7</text>
<g fill="#a8a8a8"><circle cx="679" cy="450" r="5.500"/><circle cx="697" cy="451" r="7.200"/><circle cx="715" cy="451" r="7.200"/><circle cx="733.500" cy="451" r="7.200"/><circle cx="752" cy="451" r="7.200"/></g>
<g fill="#fff" clip-path="url(#top4)"><circle cx="679" cy="450" r="5.500"/><circle cx="697" cy="451" r="7.200"/><circle cx="715" cy="451" r="7.200"/><circle cx="733.500" cy="451" r="7.200"/><circle cx="752" cy="451" r="7.200"/></g>
<text class="c" x="679" y="462">2</text><text class="c" x="697" y="462">2.5</text><text class="c" x="715" y="462">3</text><text class="c" x="733" y="462">4</text><text class="c" x="752" y="462">5</text>
<g fill="#fff"><circle cx="679" cy="474" r="7.200"/><circle cx="697" cy="474" r="7.200"/><circle cx="715" cy="474" r="7.200"/><circle cx="733.500" cy="474" r="7.200"/><circle cx="752" cy="474" r="7.200"/></g>
<rect x="669" y="477.500" width="92" height="3" fill="#a8a8a8"/>
<rect x="669" y="480" width="98" height="5" fill="#3f3f3f"/>

<!-- tool property -->
<rect x="669" y="483" width="98" height="14" fill="#3d3d3d"/>
<rect x="682" y="486" width="76" height="11" rx="1" fill="#4d4d4d"/>
<use href="#bar" x="674" y="488"/>
<path d="M691 495l2-7 2 1-2 6h4" class="i"/>
<text class="h" x="699" y="493.500">ツールプロパティ[硬め]</text>
<rect x="669" y="497" width="98" height="102" fill="#4d4d4d"/>
<rect x="669" y="497" width="48" height="22" fill="#b9b9b9"/>
<rect x="669" y="497" width="14" height="9" fill="#8f8f8f"/>
<text x="670" y="504" style="font-size:6px;fill:#e8e8e8">硬め</text>
<path d="M683 510q15-6 27-5t7 3" fill="none" stroke="#666"/>
<rect x="717" y="497" width="49" height="22" fill="#555"/>
<rect x="754" y="512" width="7" height="5" fill="#ccc"/><path d="M755 512v-2a2 2 0 0 1 3-2" class="i"/>
<text x="679" y="528" style="font-size:6.500px">ブラシサイズ</text>
<rect x="691" y="530" width="15" height="4" fill="#6a6a6a"/><path d="M691 534.500h27" stroke="#777"/>
<text x="731" y="530" style="font-size:6.500px">1.70</text><use href="#chev" x="746.500" y="529"/>
<rect x="751" y="522" width="13" height="14" fill="#5f5f5f"/><path d="M754 532h7M757.500 526v5M755.500 529l2 2 2-2" class="i"/>
<path d="M675 539.500h87M675 553.500h87M675 570.500h87" stroke="#5a5a5a"/>
<text x="679" y="547" style="font-size:5.500px;fill:#777">アンチエイリ</text>
<g fill="#777"><circle cx="712" cy="544.500" r="4"/><circle cx="723" cy="544.500" r="4"/><circle cx="735" cy="544.500" r="4"/><circle cx="746" cy="544.500" r="4"/></g>
<use href="#chev" x="756" y="544.500"/>
<text x="679" y="563.500" style="font-size:6.500px">硬さ</text>
<g fill="#6b7394"><rect x="693" y="555" width="10" height="12"/><rect x="705" y="555" width="10" height="12"/><rect x="717" y="555" width="10" height="12"/><rect x="729" y="555" width="10" height="12"/><rect x="740" y="555" width="10" height="12"/></g>
<rect x="751" y="555" width="13" height="12" fill="#5f5f5f"/><path d="M755 558l3 3-3 3" class="i"/>
<text x="679" y="575" style="font-size:6.500px">ブラシ濃度</text>
<rect x="691" y="577" width="27" height="4" fill="#6a6a6a"/>
<text x="732" y="577" style="font-size:6.500px">100</text><use href="#chev" x="746.500" y="576"/>
<rect x="751" y="570" width="13" height="13" fill="#5f5f5f"/><rect x="754" y="573" width="7" height="7" class="i"/><path d="M754 580l7-7" class="i"/>
<rect x="669" y="584" width="98" height="15" fill="#555"/>
<circle cx="741" cy="591" r="4" class="i"/><path d="M741 588v4M739 590l2 2 2-2" class="i"/>
<path d="M756 588l5 5M756 588a2 2 0 1 1 2 2" class="i"/>
<rect x="763" y="497" width="2" height="70" fill="#666"/>

<!-- right icons col -->
<rect x="769" y="39" width="21" height="21" fill="#4f4f4f"/>
<circle cx="779" cy="49.500" r="5" class="d" style="stroke:#999"/><path d="M779 50l3 3" stroke="#999"/>
<rect x="770" y="67" width="17" height="14" rx="1" fill="#4f4f4f"/><rect x="774" y="70" width="10" height="9" rx="1" fill="#aaa"/><path d="M773 71h10" stroke="#777"/>
<rect x="770" y="85" width="17" height="17" rx="1" fill="#4f4f4f"/><rect x="774" y="89" width="10" height="8" rx="1" fill="#777"/><path d="M774 94h10" stroke="#aaa"/>
<rect x="770" y="107" width="18" height="15" rx="1" fill="#4f4f4f"/><path d="M773 114l5-5 5 5-5 4z" fill="#ddd"/><path d="M781 116h5M781 118h5" stroke="#ccc"/>
<rect x="770" y="127" width="18" height="15" rx="1" fill="#4f4f4f"/><path d="M773 134l5-5 5 5-5 4z" fill="#ddd"/><circle cx="783" cy="137" r="2" fill="url(#chk)"/>
<rect x="770" y="147" width="18" height="15" rx="1" fill="#4f4f4f"/><path d="M773 154l5-5 5 5-5 4z" fill="#ddd"/><circle cx="783" cy="157" r="2.500" class="i"/>
</svg>
</div></body></html>
